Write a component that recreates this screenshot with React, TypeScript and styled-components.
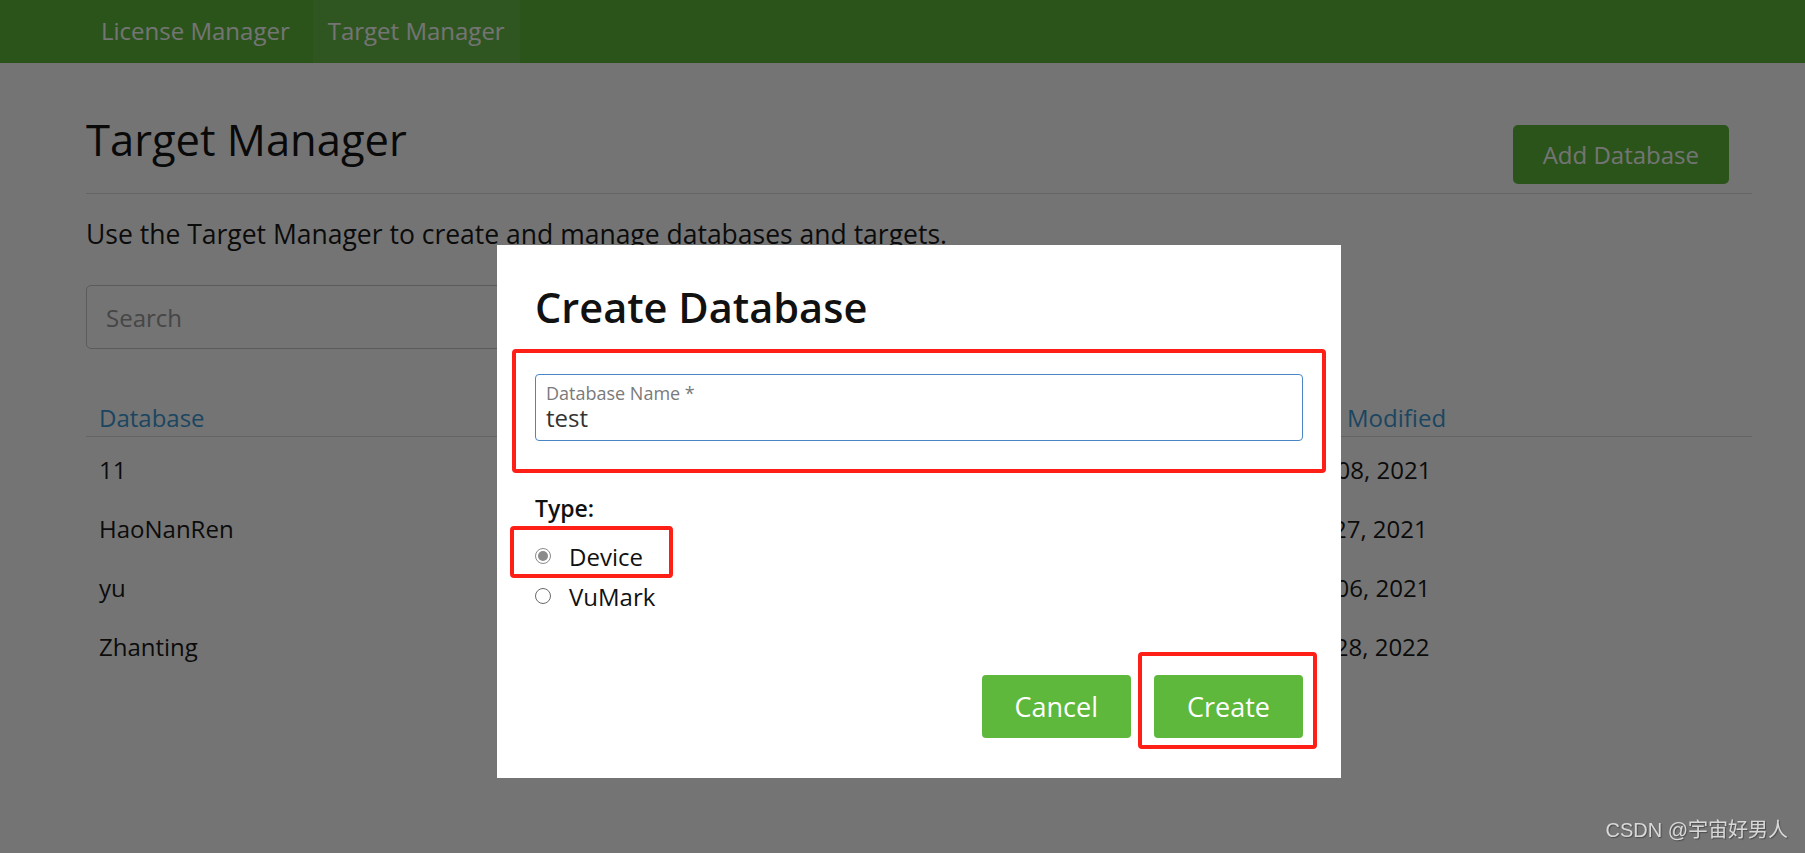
import * as React from 'react';
import styled, { createGlobalStyle } from 'styled-components';

const GlobalStyle = createGlobalStyle`
    html, body {
        margin: 0;
        padding: 0;
        background: #ffffff;
        font-family: "Open Sans", "Noto Sans", sans-serif;
        color: #222;
    }
    #root {
        height: 100vh;
        overflow: hidden;
    }
`;

const GREEN = '#5db83b';

const Page = styled.div`
    position: relative;
    height: 100vh;
    overflow: hidden;
`;

const NavBar = styled.nav`
    height: 63px;
    background: ${GREEN};
    display: flex;
    padding-left: 86px;
`;

const NavItem = styled.a<{ $active?: boolean }>`
    display: flex;
    align-items: center;
    height: 100%;
    padding: 0 15px 3px;
    margin-right: 8px;
    font-size: 24px;
    color: #ffffff;
    text-decoration: none;
    background: ${(p) => (p.$active ? 'rgba(255, 255, 255, 0.08)' : 'transparent')};
    box-sizing: border-box;
`;

const Main = styled.main`
    padding: 0 53px 0 86px;
`;

const HeaderRow = styled.div`
    display: flex;
    justify-content: space-between;
    align-items: flex-start;
    padding-top: 52px;
    padding-bottom: 9px;
    border-bottom: 1px solid #dcdcdc;
`;

const Title = styled.h1`
    margin: 0;
    font-size: 43.5px;
    line-height: 50px;
    font-weight: 500;
    color: #141414;
`;

const AddButton = styled.button`
    margin: 10px 23px 0 0;
    height: 59px;
    padding: 0 30px;
    border: none;
    border-radius: 5px;
    background: ${GREEN};
    color: #ffffff;
    font-family: inherit;
    font-size: 24px;
`;

const Intro = styled.p`
    margin: 22px 0 0;
    font-size: 26.5px;
    line-height: 36px;
    color: #1a1a1a;
`;

const SearchInput = styled.input`
    display: block;
    margin-top: 33px;
    width: 833px;
    height: 64px;
    box-sizing: border-box;
    padding: 0 19px;
    border: 1px solid #c8c8c8;
    border-radius: 5px;
    font-family: inherit;
    font-size: 24px;
    &::placeholder {
        color: #9a9a9a;
    }
`;

const Table = styled.div`
    margin-top: 51px;
`;

const Row = styled.div<{ $head?: boolean }>`
    display: grid;
    grid-template-columns: 600px 300px 289px 1fr;
    height: ${(p) => (p.$head ? '36px' : '59px')};
    align-items: center;
    font-size: 24px;
    line-height: 36px;
    color: ${(p) => (p.$head ? '#3d9ad6' : '#1a1a1a')};
    border-bottom: ${(p) => (p.$head ? '1px solid #dcdcdc' : 'none')};
    margin-bottom: ${(p) => (p.$head ? '3px' : '0')};
`;

const Cell = styled.div`
    padding: 0 13px;
    white-space: nowrap;
`;

const Backdrop = styled.div`
    position: fixed;
    inset: 0;
    background: rgba(0, 0, 0, 0.545);
`;

const Dialog = styled.div`
    position: fixed;
    left: 497px;
    top: 245px;
    width: 844px;
    box-sizing: border-box;
    padding: 38px 38px 40px;
    background: #ffffff;
`;

const DialogTitle = styled.h2`
    margin: 0;
    font-size: 41.5px;
    line-height: 48px;
    font-weight: 600;
    color: #111;
`;

const Field = styled.label`
    display: block;
    margin-top: 43px;
    height: 67px;
    box-sizing: border-box;
    padding: 7px 10px 0;
    border: 1px solid #4a86c3;
    border-radius: 4px;
`;

const FieldLabel = styled.span`
    display: block;
    font-size: 18px;
    line-height: 22px;
    color: #7a7a7a;
`;

const FieldValue = styled.span`
    display: block;
    font-size: 24px;
    line-height: 28px;
    color: #333;
`;

const TypeLabel = styled.div`
    margin-top: 52px;
    font-size: 23px;
    line-height: 30px;
    font-weight: 600;
    color: #111;
`;

const RadioGroup = styled.div`
    margin-top: 13px;
`;

const RadioRow = styled.label`
    display: flex;
    align-items: center;
    height: 40px;
    font-size: 24px;
    color: #111;
`;

const RadioDot = styled.span<{ $checked?: boolean }>`
    width: 16px;
    height: 16px;
    box-sizing: border-box;
    border-radius: 50%;
    border: 1px solid ${(p) => (p.$checked ? '#8a8a8a' : '#6a6a6a')};
    margin-right: 18px;
    display: flex;
    align-items: center;
    justify-content: center;
    &::after {
        content: '';
        width: 10px;
        height: 10px;
        border-radius: 50%;
        background: ${(p) => (p.$checked ? '#8a8a8a' : 'transparent')};
    }
`;

const Actions = styled.div`
    margin-top: 59px;
    display: flex;
    justify-content: flex-end;
    gap: 23px;
`;

const ActionButton = styled.button`
    height: 63px;
    padding: 0 33px;
    border: none;
    border-radius: 4px;
    background: ${GREEN};
    color: #ffffff;
    font-family: inherit;
    font-size: 27px;
`;

const Mark = styled.div<{ $l: number; $t: number; $w: number; $h: number }>`
    position: absolute;
    left: ${(p) => p.$l}px;
    top: ${(p) => p.$t}px;
    width: ${(p) => p.$w}px;
    height: ${(p) => p.$h}px;
    box-sizing: border-box;
    border: 4px solid #fe1f17;
    border-radius: 4px;
    pointer-events: none;
`;

const Watermark = styled.div`
    position: fixed;
    right: 17px;
    bottom: 10px;
    font-family: "Liberation Sans", "Noto Sans CJK SC", sans-serif;
    font-size: 20px;
    color: #d8d8d8;
    text-shadow: 1px 1px 1px rgba(0, 0, 0, 0.35);
`;

const rows = [
    { name: '11', type: 'Device', targets: '1', date: 'Dec 08, 2021' },
    { name: 'HaoNanRen', type: 'Device', targets: '2', date: 'Oct 27, 2021' },
    { name: 'yu', type: 'Device', targets: '1', date: 'Sep 06, 2021' },
    { name: 'Zhanting', type: 'Device', targets: '3', date: 'Feb 28, 2022' },
];

const App: React.FC = () => (
    <Page>
        <GlobalStyle />
        <NavBar>
            <NavItem href="#">License Manager</NavItem>
            <NavItem href="#" $active>Target Manager</NavItem>
        </NavBar>
        <Main>
            <HeaderRow>
                <Title>Target Manager</Title>
                <AddButton>Add Database</AddButton>
            </HeaderRow>
            <Intro>Use the Target Manager to create and manage databases and targets.</Intro>
            <SearchInput placeholder="Search" />
            <Table>
                <Row $head>
                    <Cell>Database</Cell>
                    <Cell>Type</Cell>
                    <Cell>Targets</Cell>
                    <Cell>Date Modified</Cell>
                </Row>
                {rows.map((r) => (
                    <Row key={r.name}>
                        <Cell>{r.name}</Cell>
                        <Cell>{r.type}</Cell>
                        <Cell>{r.targets}</Cell>
                        <Cell>{r.date}</Cell>
                    </Row>
                ))}
            </Table>
        </Main>
        <Backdrop />
        <Dialog>
            <DialogTitle>Create Database</DialogTitle>
            <Field>
                <FieldLabel>Database Name *</FieldLabel>
                <FieldValue>test</FieldValue>
            </Field>
            <TypeLabel>Type:</TypeLabel>
            <RadioGroup>
                <RadioRow>
                    <RadioDot $checked />
                    Device
                </RadioRow>
                <RadioRow>
                    <RadioDot />
                    VuMark
                </RadioRow>
            </RadioGroup>
            <Actions>
                <ActionButton>Cancel</ActionButton>
                <ActionButton>Create</ActionButton>
            </Actions>
            <Mark $l={15} $t={104} $w={814} $h={124} />
            <Mark $l={13} $t={281} $w={163} $h={52} />
            <Mark $l={641} $t={407} $w={179} $h={97} />
        </Dialog>
        <Watermark>CSDN @宇宙好男人</Watermark>
    </Page>
);

export default App;
